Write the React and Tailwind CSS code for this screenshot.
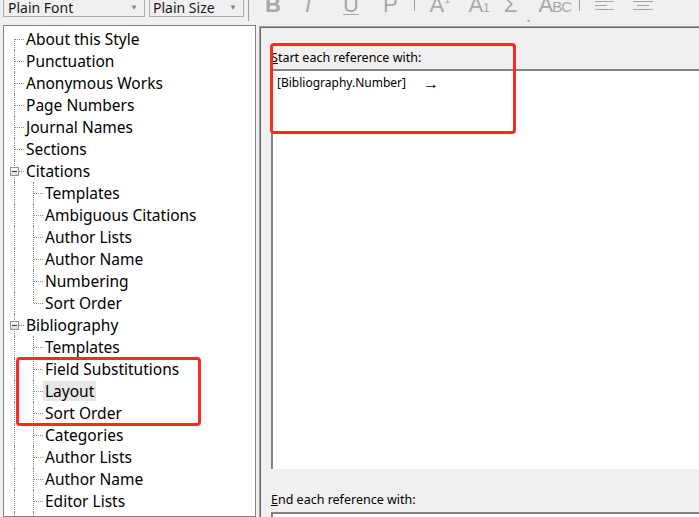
const citationKids = ["Templates", "Ambiguous Citations", "Author Lists", "Author Name", "Numbering", "Sort Order"];
const bibKids = ["Templates", "Field Substitutions", "Layout", "Sort Order", "Categories", "Author Lists", "Author Name", "Editor Lists", "Editor Name"];

const rows = [
  { label: "About this Style", level: 0, first: true },
  { label: "Punctuation", level: 0 },
  { label: "Anonymous Works", level: 0 },
  { label: "Page Numbers", level: 0 },
  { label: "Journal Names", level: 0 },
  { label: "Sections", level: 0 },
  { label: "Citations", level: 0, open: true },
  ...citationKids.map((l, i) => ({ label: l, level: 1, last: i === citationKids.length - 1 })),
  { label: "Bibliography", level: 0, open: true },
  ...bibKids.map((l) => ({ label: l, level: 1, selected: l === "Layout" })),
];

function Row({ row }) {
  return (
    <div className="flex h-[22px] items-center">
      {/* level 0 connector */}
      <div className="relative h-full w-[22px] shrink-0">
        <span
          className={`absolute left-[10px] w-0 border-l border-dotted border-[#8a8a8a] ${
            row.first ? "top-[11px] bottom-0" : "top-0 bottom-0"
          }`}
        />
        {row.level === 0 && (
          <span className="absolute left-[11px] top-[11px] h-0 w-[9px] border-t border-dotted border-[#8a8a8a]" />
        )}
        {row.open && (
          <span className="absolute left-[6px] top-[7px] flex h-[9px] w-[9px] items-center justify-center border border-[#919191] bg-gradient-to-b from-white to-[#dcdcdc]">
            <span className="h-px w-[5px] bg-[#333]" />
          </span>
        )}
      </div>
      {row.level === 1 && (
        <div className="relative h-full w-[19px] shrink-0">
          <span
            className={`absolute left-[7px] top-0 w-0 border-l border-dotted border-[#8a8a8a] ${
              row.last ? "h-[11px]" : "bottom-0"
            }`}
          />
          <span className="absolute left-[8px] top-[11px] h-0 w-[9px] border-t border-dotted border-[#8a8a8a]" />
        </div>
      )}
      <span
        className={`whitespace-nowrap text-[15.5px] leading-[20px] text-black ${
          row.selected ? "-ml-[2px] bg-[#e6e6e6] px-[2px]" : ""
        }`}
      >
        {row.label}
      </span>
    </div>
  );
}

function Tool({ children, className = "" }) {
  return <span className={`text-[22px] leading-none text-[#a8a8a8] ${className}`}>{children}</span>;
}

export default function App() {
  return (
    <div
      className="relative flex h-[517px] w-[699px] flex-col overflow-hidden bg-[#f0f0f0]"
      style={{ fontFamily: '"Noto Sans", "Open Sans", sans-serif' }}
    >
      {/* Toolbar */}
      <div className="flex h-[20px] shrink-0 items-start">
        <div className="ml-[3px] -mt-[4px] flex h-[21px] w-[142px] items-center justify-between border border-[#acacac] bg-[#f0f0f0] pl-[4px] pr-[6px]">
          <span className="pt-[2px] text-[14px] text-[#1a1a1a]">Plain Font</span>
          <span className="text-[8px] text-[#8a8a8a]">▼</span>
        </div>
        <div className="ml-[4px] -mt-[4px] flex h-[21px] w-[95px] items-center justify-between border border-[#acacac] bg-[#f0f0f0] pl-[3px] pr-[6px]">
          <span className="pt-[2px] text-[14px] text-[#1a1a1a]">Plain Size</span>
          <span className="text-[8px] text-[#8a8a8a]">▼</span>
        </div>
        <span className="ml-[4px] h-[21px] w-px bg-[#a0a0a0]" />
        <div
          className="-mt-[6px] flex items-start"
          style={{ fontFamily: '"Liberation Sans", Arial, sans-serif' }}
        >
          <Tool className="ml-[16px] font-bold">B</Tool>
          <Tool className="ml-[24px] italic">I</Tool>
          <Tool className="ml-[32px] underline decoration-1 underline-offset-2">U</Tool>
          <Tool className="ml-[24px]">P</Tool>
          <span className="ml-[16px] mt-[2px] h-[15px] w-px bg-[#a0a0a0]" />
          <Tool className="ml-[15px]">
            A<span className="align-top text-[11px]">1</span>
          </Tool>
          <Tool className="ml-[18px]">
            A<span className="text-[12px]">1</span>
          </Tool>
          <Tool className="ml-[14px] text-[20px]">Σ</Tool>
          <Tool className="ml-[8px] text-[10px] mt-[10px]">.</Tool>
          <Tool className="ml-[7px] tracking-[-1px]">
            A<span className="text-[15px]">BC</span>
          </Tool>
          <span className="ml-[8px] mt-[2px] h-[15px] w-px bg-[#a0a0a0]" />
          <svg className="ml-[15px] mt-[6px]" width="19" height="11" viewBox="0 0 19 11">
            <path d="M0 1.5h19M0 5.5h12M0 9.5h19" stroke="#a8a8a8" strokeWidth="1" />
          </svg>
          <svg className="ml-[19px] mt-[6px]" width="20" height="11" viewBox="0 0 20 11">
            <path d="M0 1.5h20M4 5.5h12M0 9.5h20" stroke="#a8a8a8" strokeWidth="1" />
          </svg>
        </div>
      </div>

      {/* Body */}
      <div className="mt-[5px] flex min-h-0 flex-1">
        {/* Tree */}
        <div className="ml-[3px] w-[253px] shrink-0 border border-[#828282] bg-white pt-[2px]">
          {rows.map((r, i) => (
            <Row key={i} row={r} />
          ))}
        </div>

        {/* Right panel */}
        <div className="ml-[3px] mt-[1px] flex flex-1 flex-col border-l border-t border-[#a0a0a0]">
          <div className="flex flex-1 flex-col border-l border-t border-[#696969] pl-[10px]">
            <div className="mt-[20px] h-[19px] text-[12.5px] leading-[19px] text-black">
              <span className="underline">S</span>tart each reference with:
            </div>
            <div className="mt-[2px] h-[400px] border-l-2 border-t-2 border-[#828282] bg-white pl-[4px] pt-[3px]">
              <div className="flex items-center text-[12px] text-black">
                <span>[Bibliography.Number]</span>
                <span className="ml-[17px] text-[16px] leading-none">→</span>
              </div>
            </div>
            <div className="mt-[21px] h-[19px] text-[12.5px] leading-[19px] text-black">
              <span className="underline">E</span>nd each reference with:
            </div>
            <div className="mt-[3px] h-[40px] border-l-2 border-t-2 border-[#828282] bg-white" />
          </div>
        </div>
      </div>

      {/* Annotation boxes */}
      <div className="pointer-events-none absolute left-[270px] top-[43px] h-[91px] w-[246px] rounded-[4px] border-[3px] border-[#ff2a1f]" />
      <div className="pointer-events-none absolute left-[16px] top-[357px] h-[69px] w-[185px] rounded-[4px] border-[3px] border-[#ff2a1f]" />
    </div>
  );
}
